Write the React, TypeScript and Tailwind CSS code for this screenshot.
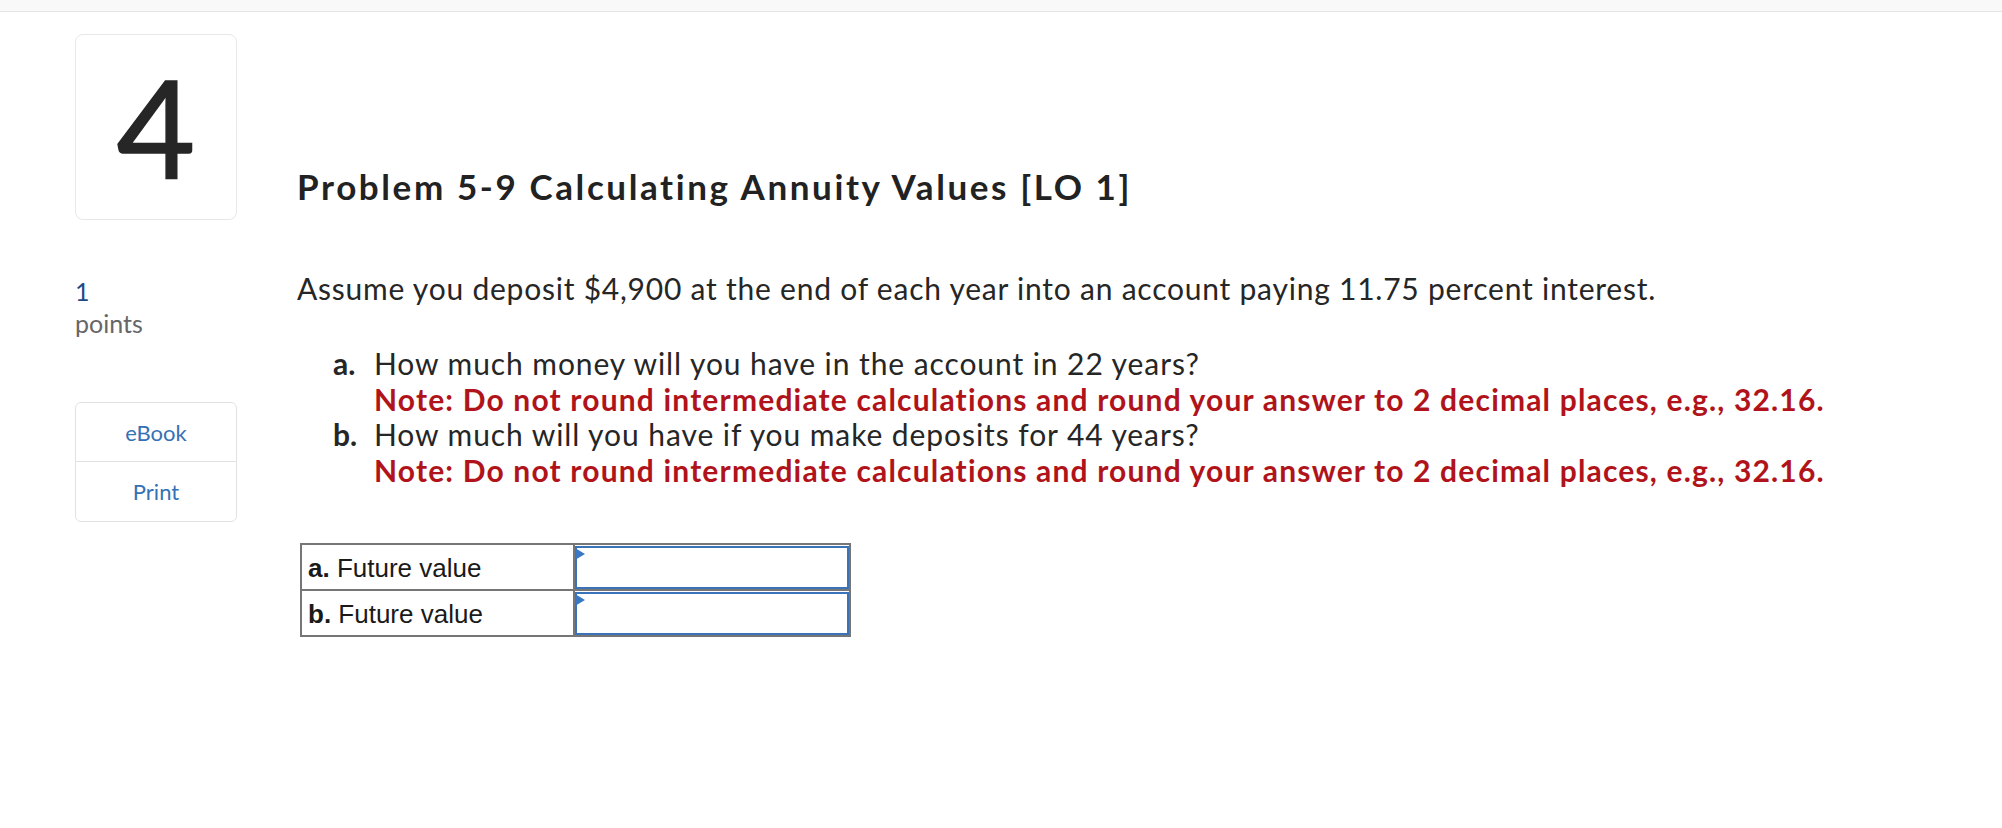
import React from "react";

export default function App() {
  return (
    <div className="w-[2002px] h-[828px] bg-white text-[#262626] font-['Lato',sans-serif] [font-variant-ligatures:none] overflow-hidden">
      <div className="h-[12px] bg-[#f9f9f9] border-b border-[#e4e4e4]"></div>
      <div className="flex pl-[75px]">
        {/* left column */}
        <div className="w-[162px] shrink-0 flex flex-col">
          <div className="mt-[22px] h-[186px] rounded-[8px] border border-[#e8e8e8] flex items-center justify-center">
            <span className="text-[136px] leading-none text-[#262626] [-webkit-text-stroke:1.5px_#262626]">4</span>
          </div>
          <div className="mt-[55px] text-[25px] leading-[32px]">
            <div className="text-[#1d4a85]">1</div>
            <div className="text-[#666666]">points</div>
          </div>
          <div className="mt-[63px] rounded-[6px] border border-[#e2e2e2] flex flex-col text-[22px] text-[#3571b5]">
            <div className="h-[59px] flex items-center justify-center border-b border-[#e2e2e2]">eBook</div>
            <div className="h-[59px] flex items-center justify-center">Print</div>
          </div>
        </div>
        {/* right column */}
        <div className="ml-[60px] flex flex-col items-start">
          <h1 className="mt-[153px] text-[35px] leading-[42px] font-bold tracking-[2.6px] text-[#222222]">
            Problem 5-9 Calculating Annuity Values [LO 1]
          </h1>
          <p className="mt-[63px] text-[30px] leading-[36px] tracking-[0.77px]">
            Assume you deposit $4,900 at the end of each year into an account paying 11.75 percent interest.
          </p>
          <div className="mt-[40px] text-[30px] leading-[35.5px] pl-[36px]">
            <div className="flex">
              <span className="w-[41px] shrink-0 font-bold">a.</span>
              <div>
                <div className="tracking-[0.92px]">How much money will you have in the account in 22 years?</div>
                <div className="font-bold text-[#b0141a] tracking-[1.17px]">
                  Note: Do not round intermediate calculations and round your answer to 2 decimal places, e.g., 32.16.
                </div>
              </div>
            </div>
            <div className="flex">
              <span className="w-[41px] shrink-0 font-bold">b.</span>
              <div>
                <div className="tracking-[0.92px]">How much will you have if you make deposits for 44 years?</div>
                <div className="font-bold text-[#b0141a] tracking-[1.17px]">
                  Note: Do not round intermediate calculations and round your answer to 2 decimal places, e.g., 32.16.
                </div>
              </div>
            </div>
          </div>
          <table className="mt-[55px] ml-[3px] w-[549px] table-fixed border-collapse font-['Liberation_Sans',Arial,sans-serif] text-[26px] text-[#1a1a1a]">
            <tbody>
              {["a.", "b."].map((l) => (
                <tr key={l} className="h-[46px]">
                  <td className="w-[273px] border-2 border-[#767676] pl-[6px] pt-[2px] align-middle whitespace-nowrap">
                    <b>{l}</b> Future value
                  </td>
                  <td className="w-[276px] border-2 border-[#767676] p-0 align-top">
                    <div className="relative h-[43px] border-2 border-[#3a73b8] mt-px">
                      <svg className="absolute left-[-2px] top-[0px]" width="10" height="12" viewBox="0 0 10 12">
                        <polygon points="0,0 10,6 0,12" fill="#3b78c4" />
                      </svg>
                    </div>
                  </td>
                </tr>
              ))}
            </tbody>
          </table>
        </div>
      </div>
    </div>
  );
}
